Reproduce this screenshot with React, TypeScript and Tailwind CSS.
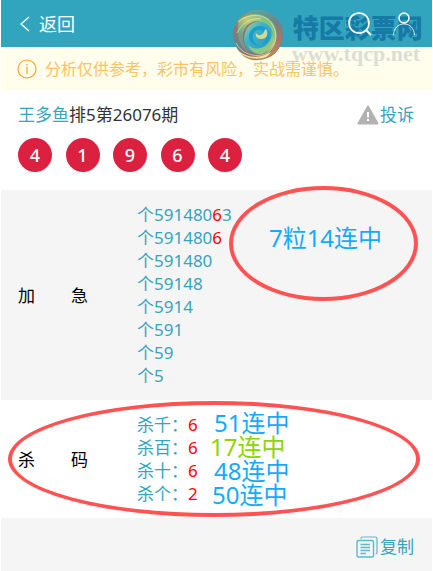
const balls = [4, 1, 9, 6, 4]

const picks = [
  { text: "个591480", hit: "6", rest: "3" },
  { text: "个591480", hit: "6", rest: "" },
  { text: "个591480", hit: "", rest: "" },
  { text: "个59148", hit: "", rest: "" },
  { text: "个5914", hit: "", rest: "" },
  { text: "个591", hit: "", rest: "" },
  { text: "个59", hit: "", rest: "" },
  { text: "个5", hit: "", rest: "" },
]

const kills = [
  { label: "杀千：", value: 6 },
  { label: "杀百：", value: 6 },
  { label: "杀十：", value: 6 },
  { label: "杀个：", value: 2 },
]

function SiteMark() {
  return (
    <div className="absolute top-2 right-2 flex items-start gap-2 pointer-events-none">
      <svg className="w-[52px] h-[54px]" viewBox="0 0 52 54">
        <defs>
          <linearGradient id="base" x1="0.2" y1="0" x2="0.4" y2="1">
            <stop offset="0" stopColor="#8e9f7a" />
            <stop offset="0.35" stopColor="#93756a" />
            <stop offset="0.65" stopColor="#5d8796" />
            <stop offset="1" stopColor="#b0654f" />
          </linearGradient>
          <linearGradient id="rim" x1="0.3" y1="0" x2="0.6" y2="1">
            <stop offset="0" stopColor="#5da59a" />
            <stop offset="0.35" stopColor="#6f8488" />
            <stop offset="0.7" stopColor="#a5766a" />
            <stop offset="1" stopColor="#c08a5a" />
          </linearGradient>
          <linearGradient id="leaf" x1="1" y1="0" x2="0" y2="1">
            <stop offset="0" stopColor="#4fb38c" />
            <stop offset="0.45" stopColor="#c2cf6d" />
            <stop offset="0.7" stopColor="#6fa58e" />
            <stop offset="1" stopColor="#b7705a" />
          </linearGradient>
          <linearGradient id="water" x1="0" y1="0" x2="1" y2="1">
            <stop offset="0" stopColor="#a9d5a4" />
            <stop offset="0.35" stopColor="#3db3c6" />
            <stop offset="0.75" stopColor="#2fa0c9" />
            <stop offset="1" stopColor="#93cc6d" />
          </linearGradient>
        </defs>
        <circle cx="26" cy="27" r="25" fill="url(#base)" />
        <path d="M14 5C27 -2 44 4 49 18C54 34 45 48 31 51C43 43 48 30 42 19C37 10 26 6 14 5Z" fill="url(#rim)" />
        <path d="M7 12C18 3 34 5 41 15C48 26 44 40 33 46C40 37 42 26 35 18C29 11 18 12 13 20C8 29 11 39 19 45C8 41 3 27 7 12Z" fill="url(#leaf)" />
        <path d="M14 22C19 12 32 11 38 19C45 29 40 42 29 46C20 47 12 40 12 31C12 28 13 25 14 22Z" fill="url(#water)" />
        <path d="M16 37C23 43 32 41 37 34C41 28 40 23 38 20C44 29 41 42 30 46C24 47 18 43 16 37Z" fill="#a9cf72" fillOpacity="0.8" />
        <path d="M18 24C22 17 32 16 36 22C40 29 36 36 29 37C34 33 36 28 32 24C28 20 22 22 21 27C20 32 23 36 27 38C19 37 15 31 18 24Z" fill="#1b9dcc" />
        <path d="M34 21C37 26 35 31 29 31C25 31 23 28 24 25C26 28 30 28 32 24C33 22 33 21 34 21Z" fill="#d2da97" />
        <path d="M6 14C19 4 33 6 40 16M5 25C9 16 19 9 29 11M4 35C10 47 26 51 37 44C45 37 46 25 40 16" fill="none" stroke="#dfe3bd" strokeWidth="1" strokeOpacity="0.75" />
        <path d="M7 43C15 50 28 51 39 44C32 55 15 55 7 43Z" fill="#efe2a0" />
        <path d="M9 46C17 51 26 52 34 49C27 54 16 53 9 46Z" fill="#a9824f" />
      </svg>
      <div className="flex flex-col items-center pt-1">
        <span className="text-[26px] leading-8 font-black text-[#1779a6]">特区彩票网</span>
        <span className="pr-1 font-['Liberation_Serif',serif] text-[22px] leading-5 font-bold text-[#d5d9d2]/85">
          www.tqcp.net
        </span>
      </div>
    </div>
  )
}

function RowTitle({ first, last }: { first: string; last: string }) {
  return (
    <h2 className="flex w-[70px] shrink-0 justify-between text-black">
      <span>{first}</span>
      <span>{last}</span>
    </h2>
  )
}

export default function App() {
  return (
    <main className="mx-px bg-white font-['Noto_Sans','Noto_Sans_CJK_SC',sans-serif] text-[17px] leading-[23px] text-[#36a3bf]">
      {/* Top bar */}
      <header className="relative flex h-[47px] items-center justify-between bg-[#32a5be] pl-[18px] pr-4 text-white">
        <button type="button" className="flex items-center gap-2 text-lg">
          <svg className="w-3 h-4" viewBox="0 0 12 16" fill="none" stroke="currentColor" strokeWidth="1.2">
            <path d="M10 1L2 8L10 15" />
          </svg>
          返回
        </button>
        <SiteMark />
        <div className="relative flex items-center gap-5">
          <button type="button" aria-label="搜索">
            <svg className="w-6 h-6" viewBox="0 0 24 24" fill="none" stroke="currentColor">
              <circle cx="11" cy="11" r="10" strokeWidth="1.6" />
              <path d="M18.500 18.500L23 23" strokeWidth="2" />
            </svg>
          </button>
          <button type="button" aria-label="我的">
            <svg className="w-6 h-6" viewBox="0 0 24 24" fill="none" stroke="currentColor">
              <circle cx="12" cy="6" r="5" strokeWidth="1.5" />
              <path d="M1.500 23C2 16 6 12 12 12S22 16 22.500 23" strokeWidth="1" strokeOpacity="0.8" />
            </svg>
          </button>
        </div>
      </header>

      {/* Risk notice */}
      <div className="flex h-[43px] items-center gap-2 bg-[#fffdeb] px-4 text-base text-[#fac364]">
        <svg className="w-5 h-5 shrink-0 text-[#fba51f]" viewBox="0 0 20 20" fill="none" stroke="currentColor">
          <circle cx="10" cy="10" r="9" strokeWidth="1.2" />
          <path d="M10 8V15M10 5V6.500" strokeWidth="1.2" />
        </svg>
        <p className="relative">分析仅供参考，彩市有风险，实战需谨慎。</p>
      </div>

      {/* Issue and result */}
      <section className="h-[100px] pl-[17px] pr-[18px] pt-[13px]">
        <div className="flex items-center justify-between">
          <h1 className="text-[#333333]">
            <a href="#author" className="text-[#36a3bf]">王多鱼</a>排5第26076期
          </h1>
          <a href="#complain" className="flex items-center gap-px">
            <svg className="w-[22px] h-5" viewBox="0 0 22 20">
              <path d="M11 1.500L20.500 18.500H1.500Z" fill="#b2b2b2" stroke="#b2b2b2" strokeWidth="2" strokeLinejoin="round" />
              <path d="M11 7V12.500M11 14V16" stroke="#fff" strokeWidth="2" />
            </svg>
            投诉
          </a>
        </div>
        <ul className="mt-3 flex w-[224px] justify-between">
          {balls.map((ball, index) => (
            <li
              key={index}
              className="flex h-[34px] w-[34px] items-center justify-center rounded-full bg-[#dc203f] text-lg font-medium text-white"
            >
              {ball}
            </li>
          ))}
        </ul>
      </section>

      {/* Urgent picks */}
      <section className="relative flex items-center gap-[49px] bg-[#f5f5f5] py-[13px] pl-[17px]">
        <RowTitle first="加" last="急" />
        <ul>
          {picks.map((pick, index) => (
            <li key={index}>
              {pick.text}
              <span className="text-[#ff0000]">{pick.hit}</span>
              {pick.rest}
            </li>
          ))}
        </ul>
        <div className="absolute -top-1 left-[228px] flex h-[115px] w-[189px] items-center justify-center rounded-[50%] border-4 border-[#ff5252] pb-3 pl-1 text-2xl text-[#14aaff]">
          7粒14连中
        </div>
      </section>

      {/* Excluded numbers */}
      <section className="relative flex items-center gap-[49px] py-[13px] pl-[17px]">
        <RowTitle first="杀" last="码" />
        <ul>
          {kills.map((kill) => (
            <li key={kill.label}>
              {kill.label}
              <span className="text-[#ff0000]">{kill.value}</span>
            </li>
          ))}
        </ul>
        <div className="absolute top-px left-[7px] h-[116px] w-[412px] rounded-[50%] border-4 border-[#ff5252]" />
        <div className="absolute top-[11px] left-[209px] flex flex-col items-center text-2xl leading-6 text-[#14aaff]">
          <span>51连中</span>
          <span className="pr-2 text-[#8fd400]">17连中</span>
          <span>48连中</span>
          <span className="pr-1">50连中</span>
        </div>
      </section>

      <footer className="flex h-[53px] items-center justify-end bg-[#f5f5f5] pr-[18px] pt-1">
        <button type="button" className="flex items-center gap-0.5">
          <svg className="w-[22px] h-[22px]" viewBox="0 0 22 22" fill="none" stroke="#5fb8cc">
            <path d="M5 3V2.500Q5 1 6.500 1H19.500Q21 1 21 2.500V16.500Q21 18 19.500 18" strokeWidth="1.2" />
            <rect x="1" y="4.500" width="16.500" height="16.500" rx="1.500" strokeWidth="1.4" />
            <path d="M4.500 8.500H14M4.500 11.500H14M4.500 14.500H14M4.500 17.500H10" strokeWidth="1.400" />
          </svg>
          复制
        </button>
      </footer>
    </main>
  )
}
